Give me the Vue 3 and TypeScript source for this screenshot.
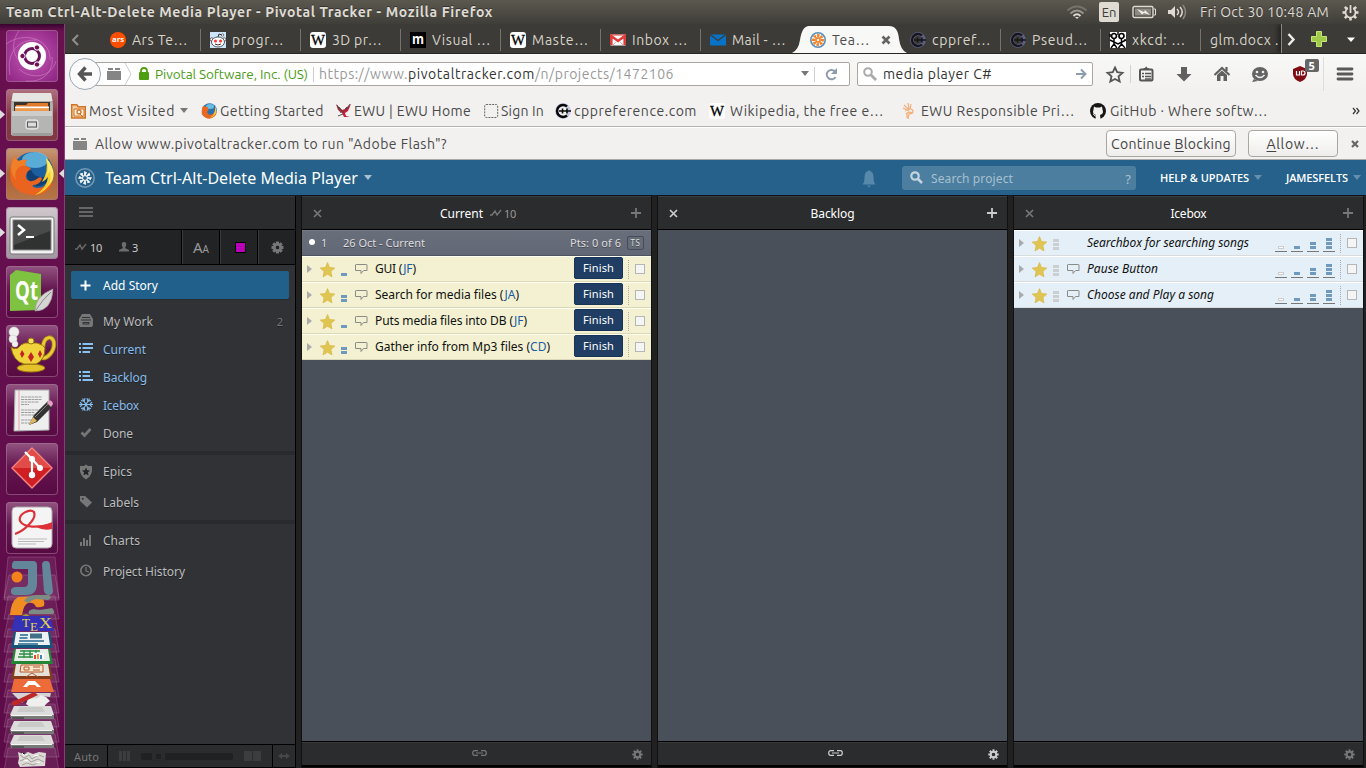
<script setup lang="ts">
import type { Directive } from 'vue'

// Tracks a label so that it fills a known width.
const vFit: Directive<HTMLElement, number> = {
  mounted(el, binding) {
    const natural = el.getBoundingClientRect().width
    const count = (el.textContent ?? '').trim().length
    if (count > 0 && natural > 0) {
      el.style.letterSpacing = `${(binding.value - natural) / count}px`
    }
  },
}

interface Tab { icon: string; label: string; w: number; active?: boolean }
const tabs: Tab[] = [
  { icon: 'ars', label: 'Ars Te…', w: 56 },
  { icon: 'reddit', label: 'progr…', w: 52 },
  { icon: 'wiki', label: '3D pr…', w: 50 },
  { icon: 'm', label: 'Visual …', w: 59 },
  { icon: 'wiki', label: 'Maste…', w: 57 },
  { icon: 'gmail', label: 'Inbox …', w: 56 },
  { icon: 'mail', label: 'Mail - …', w: 54 },
  { icon: 'pivotal', label: 'Tea…', w: 38, active: true },
  { icon: 'cpp', label: 'cppref…', w: 59 },
  { icon: 'cpp', label: 'Pseud…', w: 56 },
  { icon: 'xkcd', label: 'xkcd: …', w: 54 },
  { icon: '', label: 'glm.docx .', w: 69 },
]

interface Bookmark { icon: string; label: string; width: number; w: number; gap: number; menu?: boolean }
const bookmarks: Bookmark[] = [
  { icon: 'folder', label: 'Most Visited', width: 130, w: 86, gap: 2, menu: true },
  { icon: 'firefox', label: 'Getting Started', width: 135, w: 104, gap: 3 },
  { icon: 'eagle', label: 'EWU | EWU Home', width: 148, w: 117, gap: 2 },
  { icon: 'blank', label: 'Sign In', width: 71, w: 43, gap: 1 },
  { icon: 'cpp', label: 'cppreference.com', width: 154, w: 123, gap: 3 },
  { icon: 'wiki', label: 'Wikipedia, the free e…', width: 192, w: 154, gap: 5 },
  { icon: 'ewu', label: 'EWU Responsible Pri…', width: 189, w: 154, gap: 4 },
  { icon: 'github', label: 'GitHub · Where softw…', width: 180, w: 158, gap: 4 },
]

const menu = [
  { icon: 'inbox', label: 'My Work', w: 50, cls: '', count: '2' },
  { icon: 'list', label: 'Current', w: 43, cls: 'on' },
  { icon: 'list', label: 'Backlog', w: 44, cls: 'on' },
  { icon: 'snow', label: 'Icebox', w: 36, cls: 'on' },
  { icon: 'check', label: 'Done', w: 30, cls: '' },
]
const extras = [
  [{ icon: 'shield', label: 'Epics', w: 29 }, { icon: 'tag', label: 'Labels', w: 36 }],
  [{ icon: 'chart', label: 'Charts', w: 37 }, { icon: 'clock', label: 'Project History', w: 82 }],
]

interface Story { title: string; owner?: string; w: number; points: number; comment: boolean }
interface Panel { title: string; kind: string; tw: number; stories: Story[]; bright?: boolean; link: boolean }
const panels: Panel[] = [
  {
    title: 'Current', kind: 'current', tw: 43, link: true,
    stories: [
      { title: 'GUI', owner: 'JF', w: 41, points: 1, comment: true },
      { title: 'Search for media files', owner: 'JA', w: 144, points: 2, comment: true },
      { title: 'Puts media files into DB', owner: 'JF', w: 152, points: 1, comment: true },
      { title: 'Gather info from Mp3 files', owner: 'CD', w: 175, points: 2, comment: true },
    ],
  },
  { title: 'Backlog', kind: 'backlog', tw: 44, link: true, bright: true, stories: [] },
  {
    title: 'Icebox', kind: 'icebox', tw: 36, link: false,
    stories: [
      { title: 'Searchbox for searching songs', w: 162, points: 3, comment: false },
      { title: 'Pause Button', w: 71, points: 3, comment: true },
      { title: 'Choose and Play a song', w: 127, points: 3, comment: true },
    ],
  },
]

const tiles = ['ubuntu', 'files', 'firefox', 'terminal', 'qt', 'lamp', 'editor', 'git', 'pdf']
const traps = [557, 575, 596, 614, 629, 644, 659, 674, 690, 704, 719, 734, 748]
const gearTeeth = [0, 45, 90, 135, 180, 225, 270, 315]
</script>

<template>
  <div class="desktop">
    <header class="titlebar">
      <b v-fit="487">Team Ctrl-Alt-Delete Media Player - Pivotal Tracker - Mozilla Firefox</b>
      <div class="indicators">
        <svg class="wifi" width="20" height="16" viewBox="0 0 20 16" fill="none" stroke-width="1.800">
          <path d="M.5 6.500Q10-1.500 19.500 6.500" stroke="#77746b" /><path d="M3.500 9.500Q10 3.500 16.500 9.500" stroke="#99968c" /><path d="M6.500 12Q10 8.500 13.500 12" stroke="#dfdbd2" /><path d="M8 13h4l-2 2z" fill="#dfdbd2" />
        </svg>
        <span class="lang">En</span>
        <svg class="battery" width="25" height="14" viewBox="0 0 25 14">
          <rect x="1" y="1.500" width="20" height="11" rx="1.500" fill="none" stroke="#dfdbd2" stroke-width="1.400" /><rect x="3" y="3.500" width="16" height="7" fill="#8d8a82" /><path d="M22 4h1.500v6H22" fill="none" stroke="#dfdbd2" /><path d="M5 4l7 3 1-2 5 5-6-2-2 1.500z" fill="#f0ede7" />
        </svg>
        <svg class="volume" width="20" height="16" viewBox="0 0 20 16" fill="none" stroke="#dfdbd2" stroke-width="1.500">
          <path d="M1 6h3l4-4v12l-4-4H1z" fill="#dfdbd2" stroke="none" /><path d="M10 5q3 3 0 6M13 3q4.500 5 0 10" /><path d="M16 1q5 7 0 14" stroke="#8a877e" />
        </svg>
        <span v-fit="129" class="date">Fri Oct 30 10:48 AM</span>
        <svg class="power" width="17" height="17" viewBox="-8.500 -8.500 17 17">
          <g fill="#dfdbd2"><rect v-for="a in gearTeeth.slice(1)" :key="a" x="-1.300" y="-8" width="2.600" height="3.500" :transform="`rotate(${a})`" /></g>
          <circle r="5" fill="none" stroke="#dfdbd2" stroke-width="1.700" /><path d="M0-8V1" stroke="#4a4841" stroke-width="4.800" /><path d="M0-7.500V.5" stroke="#dfdbd2" stroke-width="1.800" />
        </svg>
      </div>
    </header>

    <div class="main">
      <aside class="launcher">
        <div v-for="t in tiles" :key="t" class="tile" :class="t">
          <svg width="52" height="52" viewBox="0 0 52 52">
            <g v-if="t === 'ubuntu'">
              <g fill="none" stroke="#d48bc8" stroke-opacity=".55"><path d="M13 1C7 9 5 21 12 29M0 14C20 0 45 10 44 30M4 45c-4-22 8-36 27-35M50 31C45 48 25 50 13 39M20 51c17 2 28-10 26-24" /></g>
              <circle cx="26" cy="26" r="14" fill="#fff" /><circle cx="26" cy="26" r="7.500" fill="none" stroke="#6b1159" stroke-width="3" />
              <g fill="#6b1159" stroke="#fff"><circle cx="16.500" cy="26" r="2.700" /><circle cx="31" cy="17.500" r="2.700" /><circle cx="31" cy="34.500" r="2.700" /></g>
            </g>
            <g v-else-if="t === 'files'">
              <path d="M7 4h38l2 11v31H5V15z" fill="#aeb0ad" /><path d="M7 4h38l1.500 8h-41z" fill="#e5e5e3" /><rect x="8" y="13" width="36" height="11" fill="#3d342e" /><path d="M10 16h10l2-2h20v7H10z" fill="#e07b2c" /><path d="M9 17.500h34v2H9z" fill="#fff" /><path d="M9 19.500h34v3H9z" fill="#ef994b" /><path d="M6 22h40l-.5 25h-39z" fill="#b5b6b4" /><path d="M6 22h40v5H6z" fill="#cdcecc" /><path d="M6.500 44h39v3h-39z" fill="#9c9d9b" /><rect x="20" y="31" width="12" height="9" rx="2" fill="#c9cac8" stroke="#eee" /><rect x="21.500" y="33" width="9" height="5" fill="#ddd" stroke="#555" />
            </g>
            <g v-else-if="t === 'firefox'">
              <circle cx="27" cy="24.500" r="20.500" fill="#1c5f9f" /><ellipse cx="29" cy="12" rx="13" ry="8" fill="#6fc4e8" opacity=".75" /><path d="M22 20c5 2 4 7 9 8 7 3 11 0 12-5 2 9-4 15-12 15-8-1-12-9-9-18z" fill="#123f72" />
              <path d="M9 8q0 4 4 5 4-2 8-1-3 3-1 6 4 1 5 3-4 2-5 6-1 5 4 6 4 1 8-3 4-2 4 1-3 6-9 6-2 2 4 3 9 0 13-10 4 7-2 12-6 6-16 5Q8 45 4.500 31 2.500 18 9 8z" fill="#ea6420" /><path d="M9 8q0 4 4 5 4-2 8-1-3 3-1 6-5-1-8 2-4 5-2 12-5-5-5-13 1-7 4-11z" fill="#f07f27" /><path d="M40 10q8 8 6.500 17Q44 43 29 47q12-7 13-18-3 4-6 5 7-11 4-24z" fill="#f7cf2c" /><path d="M40 10q4 11 0 19l4-6q3 13-7 20 15-11 9-24-2-5-6-9z" fill="#fbea6a" />
            </g>
            <g v-else-if="t === 'terminal'">
              <rect x="4" y="10" width="44" height="37" rx="2" fill="#f2f2f2" stroke="#777" /><rect x="7" y="13" width="38" height="30" fill="#303231" stroke="#888" /><path d="M8 14h36v10L8 38z" fill="#484b49" /><path d="M12 18l6 5-6 5" fill="none" stroke="#fff" stroke-width="2.500" /><path d="M20 30h8" stroke="#fff" stroke-width="2" />
            </g>
            <g v-else-if="t === 'qt'">
              <path d="M10 4l25 4v36L4 45V9z" fill="#7fc241" /><text x="9" y="34" font-family="Open Sans" font-weight="700" font-size="26" textLength="23" lengthAdjust="spacingAndGlyphs" fill="#fff">Qt</text><path d="M47 23q-1 22-18 22 0-15 18-22z" fill="#d5d6d3" stroke="#999" stroke-width=".7" /><path d="M30 44q7-11 15-18" fill="none" stroke="#888" />
            </g>
            <g v-else-if="t === 'lamp'">
              <g fill="#f0f0f0" stroke="#ccc" stroke-width=".6"><circle cx="8" cy="7" r="5" /><circle cx="7" cy="14" r="4" /><circle cx="9" cy="19" r="3" /></g><path d="M37 22c1-12 11-12 11-3 0 8-7 15-12 14" fill="none" stroke="#a6850f" stroke-width="4.500" /><path d="M37 22c1-12 11-12 11-3 0 8-7 15-12 14" fill="none" stroke="#e9cb39" stroke-width="2.800" /><ellipse cx="25" cy="43" rx="14" ry="4" fill="#e5c22c" stroke="#96770e" /><path d="M5 22q3 3 7 1 3-4 7-5h12q7 2 8 5 0 12-9 16H18Q7 36 5 22z" fill="#f0d33c" stroke="#94740b" /><circle cx="25" cy="16" r="3" fill="#f7df5a" stroke="#94740b" /><g fill="#c42323"><path d="M16 25l2.500 4-2.500 4-2-4zM25 27l3 5-3 5-3-5zM34 25l2 4-2 4-2-4z" /></g>
            </g>
            <g v-else-if="t === 'editor'">
              <path d="M9 6h34v40l-35 1z" fill="#eee" stroke="#aaa" /><path d="M13 6v40" stroke="#e6a4a4" /><g stroke="#888" stroke-width=".8"><path d="M15 13h21M15 15.500h21M15 18h18M15 20.500h8M15 26h20M15 28.500h14M15 31h18M15 36h11M15 39h10" stroke-dasharray="3 .5" /></g><path d="M28 31L42 17l5 5-16 16-8 3z" fill="#343434" /><path d="M29 33L43 19" stroke="#888" /><path d="M23 41l4-8 4 4z" fill="#dfb760" /><path d="M42 17q4-2 5 3l-2 3-4-4z" fill="#e7a1c2" />
            </g>
            <g v-else-if="t === 'git'">
              <path d="M26 5L46 25 26 45 6 25z" fill="#d01f22" stroke="#f48580" stroke-linejoin="round" stroke-width="1.500" /><path d="M26 6L45 25H7z" fill="#ee6a62" opacity=".6" /><path d="M19 9l7 7v16M26 16l8 9" fill="none" stroke="#fff" stroke-width="2.200" /><g fill="#fff"><circle cx="26" cy="16" r="3" /><circle cx="26" cy="32" r="3.200" /><circle cx="34" cy="25" r="3" /></g>
            </g>
            <g v-else>
              <rect x="6" y="5" width="40" height="41" rx="4" fill="#f4f4f4" stroke="#aaa" /><path d="M9 32C18 29 31 17 28 10 24 6 12 12 14 19 18 26 32 26 45 22" fill="none" stroke="#dc3138" stroke-width="2.200" /><path d="M30 25q9-1 16-5v7q-8 2-16-2z" fill="#dc3138" /><path d="M12 37h29M12 39.500h26M12 42h18" stroke="#bbb" />
            </g>
          </svg>
        </div>
        <svg class="stack" width="64" height="214" viewBox="0 554 64 214">
          <path v-for="(y, i) in traps" :key="y" :d="`M${8 + (i % 2)} ${y}H55L59 ${y + (i ? 23 : 43)}H4z`" fill="#fff" fill-opacity=".07" stroke="#d4a9c8" stroke-opacity=".25" />
          <path d="M14 561h19q4 0 4 4v18q0 12-10 12H15q-5 0-4-5 1-3 5-3h8q4 0 4-4v-14H15q-4 0-3-4 0-3 2-4z" fill="#64869b" /><path d="M42 565q0-4 4-4t4 4l3 26q0 4-4 4t-5-4z" fill="#64869b" /><circle cx="17" cy="577" r="5.500" fill="#f3821d" />
          <path d="M10 615q1-14 8-18l20-1q8 3 6 10-4 2-8 1-2-5-8-4-4 1-6 12z" fill="#ef8c22" /><path d="M24 601q3-6 12-6h13q4 3-1 5l-12-1q-5 1-7 4zM29 614q-2-4 5-5 4 2 18-1 4 4 1 6H38z" fill="#7d8b85" />
          <path d="M15 616h35l4 15H11z" fill="#3431b7" /><path d="M22 616l4-2 4 2z" fill="#9aa62f" /><text x="22" y="627" font-family="Liberation Serif" font-size="13" fill="#e5d34e">T</text><text x="30" y="631" font-family="Liberation Serif" font-size="13" fill="#e5d34e">E</text><text x="39" y="628" font-family="Liberation Serif" font-size="14" textLength="13" lengthAdjust="spacingAndGlyphs" fill="#e5d34e">X</text>
          <path d="M14 632h36l3 16H11z" fill="#155579" /><path d="M16 632h32l2 13H14z" fill="#edf3f5" /><path d="M20 635h8M19.500 638h8M19 641h25M18 644h20" stroke="#24658e" stroke-width="1.300" /><path d="M30 633.500h12v5H30z" fill="#3f7087" />
          <path d="M14 649h36l3 15H11z" fill="#238636" /><path d="M16 649h32l2 12H14z" fill="#e7eee7" /><path d="M20 651h20M19 654h21M18 657h22M24 650v8M30 650v8M36 650v8" stroke="#2c8d42" stroke-width="1.300" /><path d="M33 653h11v6H33z" fill="#fff" /><path d="M35 659v-4" stroke="#e34a2b" stroke-width="2" /><path d="M38 659v-5" stroke="#f0902f" stroke-width="2" /><path d="M41 659v-4" stroke="#3c82c4" stroke-width="2" />
          <path d="M14 665h36l3 14H11z" fill="#843d1b" /><path d="M16 664h32l2 12H14z" fill="#e4e1d8" /><path d="M21 665h22v7H20z" fill="#f5e4ce" stroke="#b65825" /><path d="M24 667h5v3h-5zM33 667h7M33 670h7M26 677l6-4 6 4" fill="none" stroke="#b65825" />
          <path d="M14 679h36l4 13H11z" fill="#ec6b38" /><path d="M23 687l5-6h7l6 6h-4l-2-2h-6l-2 2z" fill="#fff" />
          <path d="M12 693h39l-1 4-9-1q3 4-4 5l-10-2-5 4z" fill="#d5d5d3" /><path d="M28 699l10-1 3-3 5 2 4 4-4 3-2 3-6-1-8 1-4-3z" fill="#efefed" /><path d="M11 704q1-4 6-4l17-8 4 3-19 9q-5 3-8 0z" fill="#bd2828" />
          <g v-for="y in [706, 721, 735]" :key="y"><path :d="`M14 ${y}h37l3 9H10z`" fill="#dcdddb" /><path :d="`M20 ${y + 1}h22l3 5H17z`" fill="#cacbc9" /><path :d="`M10 ${y + 9}h44v4H11z`" fill="#777a76" /><path :d="`M11 ${y + 9.500}h41`" stroke="#f7f7f7" /><path :d="`M12 ${y + 12}h12`" stroke="#333" /></g>
          <path d="M18 752l5 2 5-2 5 2 6-2 7 1-1 13-25 1-2-4 1-5z" fill="#dddbd5" /><path d="M20 755l4 3 5-3 3 4 7-4 5 2M20 761l7-3 4 4 7-3 6 3M22 765l5-2 6 2 5-2" fill="none" stroke="#a3a19b" /><path d="M22 753l2 2 4-1M34 756l5-1M24 760l4 1M36 763l4-1" stroke="#fff" />
        </svg>
        <svg class="pips" width="64" height="260" viewBox="0 24 64 260"><path d="M0 110l5 4.500L0 119zM0 169l5 4.500L0 178zM0 228l5 4.500L0 237zM64 169l-5 4.500 5 4.500z" fill="#ddd" /></svg>
      </aside>

      <section class="window">
        <div class="tabs">
          <div class="scroll-left"><svg width="12" height="16" viewBox="0 0 12 16"><path d="M9 3L4 8l5 5" fill="none" stroke="#929087" stroke-width="2" /></svg></div>
          <div v-for="(t, i) in tabs" :key="i" class="tab" :class="{ active: t.active, nosep: i === 6 || i === 11, plain: !t.icon }">
            <svg v-if="t.active" class="tabshape" width="124" height="28" viewBox="0 0 124 28"><path d="M0 28Q10 27 12 14 14 0 21 0H101Q110 0 111 13 113 28 124 28z" fill="#f8f8f7" /></svg>
            <svg v-if="t.icon" class="fav" width="16" height="16" viewBox="0 0 16 16">
              <g v-if="t.icon === 'ars'"><circle cx="8" cy="8" r="8" fill="#ff4e00" /><text x="2" y="10" font-size="7" font-weight="700" font-family="Open Sans" textLength="12" lengthAdjust="spacingAndGlyphs" fill="#fff">ars</text></g>
              <g v-else-if="t.icon === 'reddit'"><rect width="16" height="16" fill="#cde5f8" /><circle cx="1.800" cy="7.500" r="1.700" fill="#fff" stroke="#333" stroke-width=".7" /><circle cx="14.200" cy="7.500" r="1.700" fill="#fff" stroke="#333" stroke-width=".7" /><ellipse cx="8" cy="10" rx="6.500" ry="5" fill="#fff" stroke="#333" stroke-width=".8" /><path d="M8 5l1-3 3 1M5 12q3 2 6 0" fill="none" stroke="#333" /><circle cx="12.500" cy="3" r="1.200" fill="#fff" stroke="#333" stroke-width=".6" /><circle cx="5.500" cy="9" r="1.500" fill="#f33" /><circle cx="10.500" cy="9" r="1.500" fill="#f33" /></g>
              <g v-else-if="t.icon === 'wiki'"><rect width="16" height="16" rx="3" fill="#fff" /><text x="1" y="13" font-family="Liberation Serif" font-size="15" textLength="14" lengthAdjust="spacingAndGlyphs" stroke="#000" stroke-width=".3">W</text></g>
              <g v-else-if="t.icon === 'm'"><rect width="16" height="16" fill="#000" /><text x="2" y="12" font-family="Open Sans" font-weight="700" font-size="14" textLength="12" lengthAdjust="spacingAndGlyphs" fill="#fff">m</text></g>
              <g v-else-if="t.icon === 'gmail'"><rect y="2.500" width="16" height="11" rx="1" fill="#fff" /><path d="M1.300 13V4L8 9l6.700-5v9" fill="none" stroke="#df3d3a" stroke-width="2.600" /><path d="M1 3h14" stroke="#df3d3a" /><path d="M3 13l4-4M13 13L9 9" stroke="#e5aaa7" /></g>
              <g v-else-if="t.icon === 'mail'"><path d="M0 2.500h16v11H0z" fill="#0872c6" /><path d="M0 2.500l8 6 8-6" fill="none" stroke="#3c3b37" stroke-width="1.300" /></g>
              <g v-else-if="t.icon === 'pivotal'"><circle cx="8" cy="8" r="7.200" fill="#f5f7f8" stroke="#5b91bb" stroke-width="1.600" /><g stroke="#f08227" stroke-width="1.800"><path v-for="a in gearTeeth" :key="a" d="M8 5.500V2.800l1.500.8" fill="none" :transform="`rotate(${a} 8 8)`" /></g><circle cx="8" cy="8" r="2" fill="none" stroke="#f08227" stroke-width="1.500" /></g>
              <g v-else-if="t.icon === 'cpp'" fill="none"><circle cx="8" cy="8" r="6" stroke="#5c6080" stroke-width="3.800" /><path d="M12 3.500A6 6 0 1 0 12 12.500" stroke="#15151b" stroke-width="2.300" /><path d="M4 8h12M7.500 5.500v5M12 5.500v5" stroke="#15151b" stroke-width="1.500" /></g>
              <g v-else><path d="M0 0h16v16H0z" fill="#fff" /><circle cx="4" cy="4" r="2.500" fill="#fff" stroke="#000" stroke-width="1.700" /><circle cx="11.500" cy="4" r="2.500" fill="#fff" stroke="#000" stroke-width="1.700" /><path d="M4 7v5l-3 4M4 12l3 4M11.500 7v5l-3 4M11.500 12l3.500 4M0 8l4 2 4 2 4-2 4-2M8 0v3M15 7v2M0 2v3" fill="none" stroke="#000" stroke-width="1.400" /></g>
            </svg>
            <span class="tablabel"><span v-fit="t.w">{{ t.label }}</span></span>
            <svg v-if="t.active" class="tabclose" width="10" height="10" viewBox="0 0 10 10"><path d="M1.500 1.500l7 7M8.500 1.500l-7 7" stroke="#64635f" stroke-width="2.600" /></svg>
          </div>
          <div class="tabtools">
            <svg width="85" height="30" viewBox="0 0 85 30"><path d="M6.500 10l5 5.500-5 5.500" fill="none" stroke="#eee" stroke-width="2.400" /><path d="M34.500 7.500h5v5h5v5h-5v5h-5v-5h-5v-5h5z" fill="#9fca48" stroke="#c6e57b" /><path d="M65 13.500h8l-4 4.500z" fill="#fff" /></svg>
          </div>
        </div>

        <div class="navbar">
          <div class="back"><svg width="18" height="18" viewBox="0 0 18 18"><path d="M9.500 2.500L3.500 9l6 6.500M4 9h12" fill="none" stroke="#555" stroke-width="3.400" /></svg></div>
          <div class="url">
            <svg class="brick" width="14" height="14" viewBox="0 0 14 14"><path d="M1 1h5v2H1zM8 1h5v2H8zM0 4h14v9H0z" fill="#858585" /></svg>
            <svg class="chev" width="9" height="22" viewBox="0 0 9 22"><path d="M1 0l6 11-6 11" fill="none" stroke="#ccc" /></svg>
            <svg class="lock" width="10" height="13" viewBox="0 0 10 13"><path d="M2 6V4q0-3 3-3t3 3v2" fill="none" stroke="#4d9e12" stroke-width="1.800" /><rect y="5" width="10" height="8" rx="1" fill="#4d9e12" /></svg>
            <span class="green"><span v-fit="153">Pivotal Software, Inc. (US)</span></span>
            <span class="address"><span v-fit="89" class="dim">https://www.</span><span v-fit="127">pivotaltracker.com</span><span v-fit="139" class="dim">/n/projects/1472106</span></span>
            <svg class="drop" width="8" height="6" viewBox="0 0 8 6"><path d="M0 0h8L4 5z" fill="#777" /></svg>
            <span class="reload"><svg width="13" height="13" viewBox="0 0 13 13"><path d="M10 3.500A4.700 4.700 0 1 0 10.500 9" fill="none" stroke="#8e9dac" stroke-width="2" /><path d="M12 0v6H6z" fill="#8e9dac" /></svg></span>
          </div>
          <div class="search">
            <svg width="14" height="14" viewBox="0 0 14 14"><circle cx="5" cy="5" r="3.800" fill="none" stroke="#aaa" stroke-width="2" /><path d="M8 8l5 5" stroke="#aaa" stroke-width="2.800" /></svg>
            <span v-fit="109">media player C#</span>
            <svg class="go" width="12" height="12" viewBox="0 0 12 12"><path d="M1 6h9M6 1.500l4.500 4.500L6 10.500" fill="none" stroke="#8b9dae" stroke-width="2" /></svg>
          </div>
          <svg class="tools" width="273" height="37" viewBox="1093 54 273 37">
            <path d="M1115 67.500l2.200 4.700 5.300.6-4 3.600 1.200 5.200-4.700-2.600-4.700 2.600 1.200-5.200-4-3.600 5.300-.6z" fill="none" stroke="#555" stroke-width="1.800" />
            <path d="M1130.500 65v18" stroke="#ccd3db" />
            <rect x="1140" y="69.500" width="12.500" height="11" rx="1" fill="none" stroke="#565656" stroke-width="2" /><path d="M1142 73.500h2M1145 73.500h6M1142 76.500h2M1145 76.500h6M1145 79h6" stroke="#565656" stroke-width="1.300" /><path d="M1142 70l2-2h1q1.200-3 2.400 0h1l2 2z" fill="#565656" />
            <path d="M1181 67h6v7h4.500l-7.500 7.500-7.500-7.500h4.500z" fill="#606060" />
            <path d="M1214.500 75l7.500-7 7.500 7M1226.500 67v4" fill="none" stroke="#606060" stroke-width="2.200" /><path d="M1217 75l5-4.500 5 4.500v6h-3.500v-5h-3v5H1217z" fill="#606060" />
            <ellipse cx="1260" cy="74" rx="8" ry="7" fill="#646464" /><path d="M1254 79l-2 3 6-1z" fill="#646464" /><circle cx="1257" cy="72" r="1.300" fill="#eee" /><circle cx="1263" cy="72" r="1.300" fill="#eee" /><path d="M1255.500 75q4.500 5 9 0" fill="none" stroke="#eee" stroke-width="1.400" />
            <path d="M1300 66l7 3v5q0 5-7 8-7-3-7-8v-5z" fill="#800d14" /><path d="M1296.500 71v4h3V71m2 0h1.500q2 0 2 2t-2 2h-1.500z" fill="none" stroke="#fff" stroke-width="1.200" />
            <rect x="1305" y="59" width="14" height="13" rx="2" fill="#666" /><text x="1308.500" y="69.500" font-family="Open Sans" font-size="11" font-weight="700" fill="#fff">5</text>
            <path d="M1323.500 57v34" stroke="#ddd" /><path d="M1338 69h14M1338 74h14M1338 79h14" stroke="#595959" stroke-width="2.800" stroke-linecap="round" />
          </svg>
        </div>

        <nav class="bookmarks">
          <div v-for="b in bookmarks" :key="b.label" class="bm" :style="{ width: b.width + 'px' }">
            <svg width="16" height="16" viewBox="0 0 16 16">
              <g v-if="b.icon === 'folder'"><path d="M.7 15V1.700h5l1.500 2h7.100V15z" fill="#f5c99a" stroke="#d07325" stroke-width="1.400" /><path d="M3 6h10v7H3z" fill="#fff4e6" stroke="#d07325" /><circle cx="8" cy="9" r="2" fill="none" stroke="#d07325" stroke-width="1.300" /><path d="M9 11l3 3" stroke="#d07325" /></g>
              <g v-else-if="b.icon === 'firefox'"><circle cx="8.500" cy="7.500" r="7.300" fill="#2c72ad" /><ellipse cx="9" cy="3.500" rx="4" ry="2.500" fill="#6cbde4" /><path d="M2 3q2 0 3 1 1 0 2 0-1 2 1 3-3 1-1 4 3 2 6-1 1-2 1-4 3 4 0 7-4 4-9 2-7-3-3-12z" fill="#e86821" /><path d="M14 3q2 4 1 7-2 4-6 5 4-3 5-7z" fill="#f7c93d" /></g>
              <g v-else-if="b.icon === 'eagle'"><path d="M0 1l6 6 3-1 6-5-3 7-3 2 1 3 4 1-6 0-2-4-4-3z" fill="#c81f3a" /><path d="M1 2l4 8M14 1l-5 7M2 13l5-2M9 6l2-2M3 4l5 6" stroke="#444" stroke-width=".9" /></g>
              <rect v-else-if="b.icon === 'blank'" x=".7" y="1.500" width="13" height="13" rx="1.500" fill="none" stroke="#666" stroke-dasharray="2 1" />
              <g v-else-if="b.icon === 'cpp'" fill="none"><circle cx="8" cy="8" r="6" stroke="#c5c8dd" stroke-width="3.800" /><circle cx="8" cy="8" r="4.500" fill="#f2f1f0" /><path d="M12 3.500A6 6 0 1 0 12 12.500" stroke="#08080a" stroke-width="2.500" /><path d="M4 8h12M7.500 5.500v5M12 5.500v5" stroke="#08080a" stroke-width="1.600" /></g>
              <g v-else-if="b.icon === 'wiki'"><rect width="16" height="16" rx="3" fill="#fff" /><text x="1" y="13" font-family="Liberation Serif" font-size="15" textLength="14" lengthAdjust="spacingAndGlyphs" stroke="#000" stroke-width=".3">W</text></g>
              <g v-else-if="b.icon === 'ewu'" fill="none" stroke="#f2ad77" stroke-width="1.200"><path d="M2 5l6 3M3 2l5 5M7 0l1 6M10 1L9 6M4 8q7-4 8 0 0 3-4 3M6 10v5M5 11q3-3 6-1l-3 1-1 5" /></g>
              <g v-else><circle cx="8" cy="8" r="8" fill="#171515" /><path d="M4 3.500l2 1h4l2-1 .5 3q1.500 4.500-2.500 5.500l.5 4h-5L6 12Q2 11 3.500 6.500z" fill="#f2f1f0" /><path d="M3 11q1 0 2 2h1" fill="none" stroke="#f2f1f0" /></g>
            </svg>
            <span v-fit="b.w" :style="{ marginLeft: b.gap + 'px' }">{{ b.label }}</span>
            <i v-if="b.menu" class="caret" />
          </div>
          <svg class="more" width="8" height="8" viewBox="0 0 8 8"><path d="M1 1l2.500 3L1 7M4.500 1L7 4 4.500 7" fill="none" stroke="#333" stroke-width="1.200" /></svg>
        </nav>

        <div class="notice">
          <svg width="14" height="14" viewBox="0 0 14 14"><path d="M1 1h5v2H1zM8 1h5v2H8zM0 4h14v9H0z" fill="#858585" /></svg>
          <span v-fit="352" class="msg">Allow www.pivotaltracker.com to run "Adobe Flash"?</span>
          <button class="block"><span v-fit="120">Continue <u>B</u>locking</span></button>
          <button class="allow"><span v-fit="53"><u>A</u>llow…</span></button>
          <svg class="x" width="8" height="8" viewBox="0 0 8 8"><path d="M1 1l6 6M7 1L1 7" stroke="#666" stroke-width="2.200" /></svg>
        </div>

        <div class="projectbar">
          <svg class="logo" width="20" height="20" viewBox="-10 -10 20 20"><circle r="9.200" fill="none" stroke="#779bb5" stroke-width="1.400" /><g stroke="#fff" stroke-width="1.700" fill="none"><path v-for="a in gearTeeth" :key="a" d="M0-2.500V-5.600l1.600.8" :transform="`rotate(${a})`" /></g><circle r="2.400" fill="none" stroke="#fff" /></svg>
          <span v-fit="253" class="project">Team Ctrl-Alt-Delete Media Player</span><i class="caret light" />
          <svg class="bell" width="14" height="18" viewBox="0 0 14 18"><path d="M.5 14.500q2-2 2-7.500 0-5 3.500-6V.5h2V1q3.500 1 3.500 6 0 5.500 2 7.500zM5 15.500h4l-2 2z" fill="#5689aa" /></svg>
          <div class="psearch"><svg width="13" height="13" viewBox="0 0 13 13"><circle cx="5" cy="5" r="3.700" fill="none" stroke="#c5d5e0" stroke-width="2.200" /><path d="M8 8l4 4" stroke="#c5d5e0" stroke-width="2.500" /></svg><span v-fit="82">Search project</span><em>?</em></div>
          <b v-fit="89" class="help">HELP &amp; UPDATES</b><i class="caret faint" />
          <b v-fit="62" class="user">JAMESFELTS</b><i class="caret faint" />
        </div>

        <div class="workspace">
          <div class="sidebar">
            <div class="burger"><i /><i /><i /></div>
            <div class="stats">
              <div class="vel"><svg width="12" height="8" viewBox="0 0 12 8"><path d="M0 6h2l3-4 2 4 4-5" fill="none" stroke="#666" stroke-width="1.500" /></svg><span v-fit="12">10</span><svg class="person" width="10" height="10" viewBox="0 0 10 10"><path d="M3 4q-1-4 2-4t2 4l-1 2 4 2v1.500H0V8l4-2z" fill="#6d6d6d" /></svg><span>3</span></div>
              <div class="font"><big>A</big><small>A</small></div>
              <div><i class="swatch" /></div>
              <div><svg width="13" height="13" viewBox="-6.500 -6.500 13 13" fill="#777"><rect v-for="a in gearTeeth" :key="a" x="-1.500" y="-6" width="3" height="4" :transform="`rotate(${a})`" /><circle r="3.300" fill="none" stroke="#777" stroke-width="2.600" /></svg></div>
            </div>
            <div class="add"><svg width="11" height="11" viewBox="0 0 11 11"><path d="M5.500 .5v10M.5 5.500h10" stroke="#fff" stroke-width="2" /></svg><span v-fit="55">Add Story</span></div>
            <div class="menu">
              <div v-for="m in menu" :key="m.label" class="entry" :class="m.cls">
                <svg width="14" height="14" viewBox="0 0 14 14">
                  <g v-if="m.icon === 'inbox'"><path d="M3 0h8l3 5v6l-1 2H1l-1-2V5z" fill="#777" /><path d="M3 3.500h8M2 6h10M4 8.500h6v1.500H4z" fill="none" stroke="#303236" /></g>
                  <path v-else-if="m.icon === 'list'" :d="m.label === 'Current' ? 'M0 2h2M3.500 2H14M0 6h2M3.500 6H14M0 10h2M3.500 10H11' : 'M0 2h2M3.500 2H11M0 6h2M3.500 6H11M0 10h2M3.500 10H14'" stroke="#87c0f3" stroke-width="2" />
                  <g v-else-if="m.icon === 'snow'" stroke="#87c0f3" stroke-width="1.100" fill="none"><path v-for="a in [30, 90, 150, 210, 270, 330]" :key="a" d="M7 6.500V-.5M4.700.5L7 2.800 9.300.5" :transform="`rotate(${a} 7 6.500)`" /></g>
                  <path v-else d="M2.500 6.500l3 3L11.500 3" fill="none" stroke="#777" stroke-width="2.600" />
                </svg>
                <span v-fit="m.w">{{ m.label }}</span><em v-if="m.count">{{ m.count }}</em>
              </div>
            </div>
            <div v-for="(g, gi) in extras" :key="gi" class="extra">
              <div v-for="m in g" :key="m.label" class="entry">
                <svg width="14" height="14" viewBox="0 0 14 14">
                  <g v-if="m.icon === 'shield'"><path d="M7-.5l2 1.500 4 0q1 10-6 13.500Q0 11 1 1l4 0z" fill="#777" /><path d="M7 2.500l1.200 2.700 2.900.3-2.200 2 .7 2.900L7 9l-2.600 1.400.7-2.900-2.200-2 2.900-.3z" fill="#222428" /></g>
                  <g v-else-if="m.icon === 'tag'"><path d="M1 0h5l7 6.500L8 11.500 1 5z" fill="#777" /><circle cx="3.700" cy="2.700" r="1" fill="#303236" /></g>
                  <path v-else-if="m.icon === 'chart'" d="M2 12V8M5 12V4M8 12V6M11 12V1" stroke="#777" stroke-width="2" />
                  <g v-else fill="none" stroke="#777"><circle cx="7" cy="5.500" r="5.200" stroke-width="1.600" /><path d="M7 2v4l3 1" stroke-width="1.200" /></g>
                </svg>
                <span v-fit="m.w">{{ m.label }}</span>
              </div>
            </div>
            <div class="zoombar"><div class="auto"><span v-fit="25">Auto</span></div><div class="slider"><i class="cols" /><i class="track"><i /></i><i class="wide" /></div><div class="arrows"><svg width="12" height="8" viewBox="0 0 12 8"><path d="M0 4l4-3v2h4V1l4 3-4 3V5H4v2z" fill="#454749" /></svg></div></div>
          </div>

          <div v-for="p in panels" :key="p.title" class="panel" :class="[p.kind, { bright: p.bright }]">
            <div class="phead">
              <svg width="9" height="9" viewBox="0 0 9 9"><path d="M1 1l7 7M8 1L1 8" class="ctl" stroke-width="1.700" /></svg>
              <div class="ptitle"><span v-fit="p.tw">{{ p.title }}</span><template v-if="p.kind === 'current'"><svg width="12" height="8" viewBox="0 0 12 8"><path d="M0 6h2l3-4 2 4 4-5" fill="none" stroke="#777" stroke-width="1.400" /></svg><em v-fit="12">10</em></template></div>
              <svg width="10" height="10" viewBox="0 0 10 10"><path d="M5 0v10M0 5h10" class="ctl" stroke-width="1.800" /></svg>
            </div>
            <div v-if="p.kind === 'current'" class="iteration"><i class="dot" /><span class="num">1</span><span v-fit="82">26 Oct - Current</span><span v-fit="51" class="pts">Pts: 0 of 6</span><span class="ts">TS</span></div>
            <div class="stories">
              <div v-for="s in p.stories" :key="s.title" class="story">
                <i class="expand" />
                <svg width="16" height="16" viewBox="0 0 16 16"><path d="M7.500 .6l2.100 4.900 5.200.5-3.900 3.600 1.100 5.300L7.500 12.200l-4.500 2.700 1.100-5.300L.2 6l5.200-.5z" fill="#e0c552" stroke="#d7b743" stroke-width=".7" /></svg>
                <span class="points"><i v-for="n in s.points" :key="n" /></span>
                <span><svg v-if="s.comment" class="bubble" width="13" height="12" viewBox="0 0 13 12"><path d="M1.500 1.500h10q.5 0 .5.500v5.500H8.500L6 10.500v-3H.5V2q0-.5.5-.5z" fill="none" stroke="#8b8b85" /></svg></span>
                <span class="name"><span v-fit="s.w">{{ s.title }}<template v-if="s.owner"> (<a>{{ s.owner }}</a>)</template></span></span>
                <span v-if="s.owner" class="finish"><span v-fit="31">Finish</span></span>
                <span v-else class="estimates"><i v-for="n in 4" :key="n" class="est"><b v-for="k in Math.max(1, n - 1)" :key="k" :class="{ hollow: n === 1 }" /></i></span>
                <span class="pick"><i /></span>
              </div>
            </div>
            <div class="pfoot"><svg v-if="p.link" class="link" width="15" height="6" viewBox="0 0 15 6"><path d="M6 .7H2.500Q.7.700.7 3t1.800 2.300H6M9 .7h3.500Q14.300.700 14.300 3t-1.800 2.300H9M4 3h7" fill="none" class="ctl2" stroke-width="1.200" /></svg><svg class="cog" width="11" height="11" viewBox="-5.500 -5.500 11 11"><g class="ctlf"><rect v-for="a in gearTeeth" :key="a" x="-1" y="-5.200" width="2" height="3" :transform="`rotate(${a})`" /></g><circle r="2.800" fill="none" class="ctl2" stroke-width="2" /></svg></div>
          </div>
        </div>
      </section>
    </div>
  </div>
</template>

<style>
body { overflow: hidden; }
</style>
<style scoped>
* { box-sizing: border-box; }
.desktop { width: 1366px; height: 768px; overflow: hidden; font-family: "Ubuntu", "Noto Sans", "Open Sans", sans-serif; font-size: 14px; display: flex; flex-direction: column; }
svg { display: block; flex: none; }
span, b { white-space: nowrap; }
[class*="label"] > span { display: inline-block; }
em, i { font-style: normal; }
.titlebar { height: 24px; flex: none; background: linear-gradient(#5b584f, #403e39); color: #dfdbd2; display: flex; align-items: center; justify-content: space-between; padding-left: 6px; text-shadow: 0 -1px #333; }
.titlebar b { font-size: 14px; }
.indicators { display: flex; align-items: center; height: 24px; width: 299px; flex: none; }
.lang { width: 20px; height: 20px; margin: 0 13px 0 12px; border-radius: 2px; background: #dfdbd2; color: #3c3b37; font-size: 13px; line-height: 20px; text-align: center; text-shadow: none; }
.battery { margin-right: 10px; }
.volume { margin-right: 13px; }
.power { margin-left: 13px; }
.main { display: flex; flex: 1; min-height: 0; }
.launcher { width: 65px; flex: none; background: linear-gradient(#38052f, #69104f 7px, #630e4d 50%, #5d0b48); border-right: 1px solid #8b3d77; display: flex; flex-direction: column; align-items: flex-start; gap: 7px; padding-top: 6px; position: relative; }
.tile { width: 52px; height: 52px; flex: none; margin-left: 6px; border-radius: 4px; background: linear-gradient(#925481, #651650 45%, #570942); box-shadow: inset 0 0 0 1px #a4759699; overflow: hidden; }
.tile.ubuntu { background: radial-gradient(#c459b6, #8c2280); }
.tile.files { background: linear-gradient(#b07180, #873642 50%, #823844); }
.tile.firefox { background: linear-gradient(#c99878, #a86237 50%, #b87647); }
.tile.terminal { background: linear-gradient(#d0c8cd, #a197a0); }
.stack { margin-top: -7px; }
.pips { position: absolute; left: 0; top: 0; }
.window { flex: 1; min-width: 0; display: flex; flex-direction: column; color: #4a4a4a; }
.tabs { height: 30px; flex: none; background: #3c3b37; border-bottom: 1px solid #252522; display: flex; overflow: hidden; position: relative; color: #d8d4ca; }
.scroll-left { width: 35px; flex: none; padding: 8px 0 0 4px; }
.tab { width: 100px; flex: none; display: flex; align-items: center; padding: 2px 0 0 10px; height: 29px; position: relative; padding-bottom: 0; }
.tab:not(.nosep):not(.active)::after { content: ''; position: absolute; right: -1px; top: 5px; width: 1px; height: 22px; background: #74736e; }
.tab.plain { width: 80px; }
.tab .fav { position: relative; overflow: visible; }
.tablabel { margin-left: 6px; position: relative; line-height: 20px; }
.tab.plain .tablabel { margin-left: 0; }
.tab.active { color: #4c4c4c; z-index: 2; }
.tabshape { position: absolute; left: -12px; top: 2px; }
.tabclose { position: absolute; left: 81px; top: 11px; }
.tabtools { width: 85px; border-left: 1px solid #8a8983; flex: none; margin-left: 1px; background: #3c3b37; box-shadow: -3px 0 5px #222; }
.navbar { height: 37px; flex: none; background: linear-gradient(#f8f8f7, #f2f1f0); display: flex; position: relative; }
.back { position: absolute; left: 4px; top: 4px; width: 32px; height: 32px; border: 1px solid #9aa7b4; border-radius: 50%; background: #fbfbfb; display: grid; place-items: center; z-index: 2; }
.url, .search { height: 24px; border: 1px solid #aaa7a1; border-radius: 2px; background: #fff; display: flex; align-items: center; margin-top: 8px; line-height: 23px; }
.url { width: 765px; margin-left: 20px; padding-left: 21px; }
.chev { margin-left: 3px; margin-right: 6px; }
.lock { margin-top: -2px; }
.green { margin-left: 6px; width: 159px; border-right: 1px solid #ccc; height: 15px; line-height: 14px; color: #4b9b15; font-size: 13.500px; }
.green span, .address span { display: inline-block; }
.address { margin-left: 5px; width: 482px; color: #333; display: flex; margin-top: 1px; }
.address .dim { color: #999; }
.drop { margin-right: 5px; }
.reload { border-left: 1px solid #ccc; padding: 1px 0 1px 10px; }
.search { width: 236px; margin-left: 7px; padding: 0 5px; color: #333; }
.search span { margin-left: 6px; }
.search .go { margin-left: auto; }
.bookmarks { height: 36px; flex: none; background: #f2f1f0; border-bottom: 1px solid #b6b3ad; display: flex; align-items: center; padding: 4px 0 0 6px; line-height: 20px; }
.bm { display: flex; align-items: center; flex: none; }
.bm svg { overflow: visible; }
.caret { width: 8px; height: 5px; background: #777; clip-path: polygon(0 0, 100% 0, 50% 100%); margin-left: 6px; flex: none; }
.bm .caret { margin-left: 5px; }
.more { margin-left: 82px; }
.notice { height: 33px; flex: none; background: #f2f1f0; border-bottom: 1px solid #aaa9a7; border-top: 1px solid #fff; display: flex; align-items: center; padding-left: 8px; }
.msg { margin-left: 8px; }
.notice button { font: inherit; color: #444; height: 27px; border: 1px solid #aaa7a1; border-radius: 4px; background: linear-gradient(#fff, #eeedeb); padding: 0; line-height: 24px; }
.notice button span { display: inline-block; }
.block { width: 130px; margin-left: auto; }
.allow { width: 90px; margin-left: 12px; }
.notice .x { margin: 0 7px 0 13px; }
u { text-underline-offset: 2px; }
.projectbar { height: 35px; flex: none; background: #25618a; color: #fff; font-family: "Noto Sans", sans-serif; display: flex; align-items: center; padding-left: 10px; }
.project { margin-left: 10px; font-size: 16px; line-height: 22px; }
.caret.light { background: #a9c0d1; margin-left: 6px; }
.bell { margin-left: 490px; margin-top: 2px; }
.psearch { width: 234px; height: 24px; flex: none; margin-left: 26px; background: #4c7e9f; border-radius: 3px; display: flex; align-items: center; padding: 0 5px 0 8px; color: #a7c0d0; font-size: 12px; }
.psearch span { margin-left: 8px; margin-top: 1px; }
.psearch em { margin-left: auto; font-size: 13px; margin-top: 2px; }
.help, .user { font-size: 11px; font-weight: 600; font-family: "Open Sans", sans-serif; }
.help { margin-left: 24px; }
.user { margin-left: 24px; }
.caret.faint { background: #648fae; margin-left: 5px; }
.workspace { flex: 1; min-height: 0; background: #212121; border-top: 1px solid #161b1f; display: flex; font-family: "Noto Sans", "Open Sans", sans-serif; font-size: 12px; }
.sidebar { width: 231px; flex: none; background: #303236; border-right: 1px solid #000; display: flex; flex-direction: column; height: 572px; border-bottom: 1px solid #000; }
.burger { height: 34px; flex: none; background: #2b2c2e; border-bottom: 1px solid #000; border-top: 1px solid #38393b; padding: 10px 14px; display: flex; flex-direction: column; gap: 2px; }
.burger i { width: 14px; height: 2px; background: #666; }
.stats { height: 35px; flex: none; background: #222325; border-bottom: 1px solid #000; display: flex; color: #ccc; font-size: 11px; }
.stats > div { width: 38px; border-right: 1px solid #000; border-left: 1px solid #3a3a3c; display: flex; align-items: center; justify-content: center; }
.stats > div:last-child { border-right: 0; width: 37px; }
.stats .vel { width: 117px; border-left: 0; justify-content: flex-start; padding-left: 10px; }
.vel span { margin-left: 3px; }
.vel .person { margin-left: 17px; }
.vel .person + span { margin-left: 3px; }
.font { color: #999; align-items: baseline !important; padding-top: 7px; }
.font big { font-size: 15px; } .font small { font-size: 10px; }
.swatch { width: 8px; height: 8px; background: #b900b9; outline: 1px solid #000; margin: 1px 0 0 2px; width: 9px; height: 9px; }
.add { margin: 6px 6px 8px; height: 28px; flex: none; background: #21608b; border-radius: 2px; display: flex; align-items: center; color: #fff; padding-left: 9px; box-shadow: 0 1px #2a2b2e; }
.add span { margin-left: 12px; }
.menu { padding-bottom: 4px; }
.entry { height: 28px; display: flex; align-items: center; padding-left: 14px; color: #bdbdbd; text-shadow: 0 1px #1e1f22; }
.entry svg { overflow: visible; }
.entry span { margin-left: 10px; }
.entry.on { color: #87bcec; }
.entry em { margin-left: auto; margin-right: 12px; font-size: 11px; color: #777; }
.extra { border-top: 4px solid #282a2d; padding: 1px 0 2px; }
.extra .entry { height: 31px; }
.zoombar { margin-top: auto; height: 23px; flex: none; background: #2b2c2d; border-top: 1px solid #000; display: flex; color: #777; font-size: 11px; }
.auto { width: 43px; border-right: 1px solid #000; padding-left: 9px; line-height: 23px; }
.slider { width: 165px; border-right: 1px solid #000; display: flex; align-items: center; }
.cols { width: 11px; height: 10px; margin-left: 11px; background: repeating-linear-gradient(90deg, #3b3d3f 0 3px, transparent 3px 4px); }
.track { width: 92px; height: 7px; margin-left: 11px; border-radius: 2px; background: #202123; }
.track i { display: block; width: 13px; height: 13px; border: 4px solid #292b2c; margin: -3px 0 0 11px; background: #202122; }
.wide { width: 17px; height: 10px; margin-left: 11px; background: repeating-linear-gradient(90deg, #3b3d3f 0 8px, transparent 8px 9px); }
.arrows { flex: 1; display: grid; place-items: center; }
.panel { width: 349px; flex: none; margin-left: 7px; height: 571px; display: flex; flex-direction: column; background: #49505a; box-shadow: 0 0 0 1px #111; border-bottom: 2px solid #000; }
.sidebar + .panel { margin-left: 6px; }
.phead { height: 34px; flex: none; background: #2b2c2e; border-top: 1px solid #384045; border-bottom: 1px solid #000; display: flex; align-items: center; justify-content: space-between; padding: 0 10px 0 11px; color: #fff; }
.ptitle { display: flex; align-items: center; }
.current .ptitle { padding-left: 3px; }
.ptitle svg { margin: 0 2px 0 7px; }
.ptitle em { color: #999; font-size: 11px; }
.ctl { stroke: #777; } .ctl2 { stroke: #777; } .ctlf { fill: #777; }
.bright .ctl, .bright .ctl2 { stroke: #ccc; } .bright .ctlf { fill: #ccc; }
.iteration { height: 26px; flex: none; background: linear-gradient(#696e7b, #636876); border-top: 1px solid #747a86; border-bottom: 1px solid #50545e; color: #dedede; display: flex; align-items: center; padding: 0 7px; font-size: 11px; line-height: 22px; text-shadow: 0 1px #454952; }
.iteration span:not(.ts) { margin-top: -1px; }
.dot { width: 6px; height: 6px; border-radius: 50%; background: #fff; margin-top: -2px; }
.num { width: 22px; margin-left: 6px; }
.pts { margin-left: auto; }
.ts { width: 17px; height: 14px; border: 1px solid #464b59; border-radius: 2px; font-size: 8px; line-height: 12px; text-align: center; margin-left: 6px; letter-spacing: .5px; margin-top: -1px; }
.stories { flex: 1; }
.story { height: 26px; display: grid; grid-template-columns: 18px 21px 14px 20px 1fr 65px 23px; align-items: center; background: #f3f1d1; border-top: 1px solid #fffff0; border-bottom: 1px solid #dad8b9; color: #111; line-height: 22px; }
.icebox .story { background: #e4eff8; border-top-color: #fff; border-bottom-color: #d8dcdf; font-style: italic; }
.expand { width: 5px; height: 8px; background: #aaa; clip-path: polygon(0 0, 100% 50%, 0 100%); margin-left: 5px; }
.story > svg { margin-top: 1px; }
.points { height: 16px; display: flex; flex-direction: column; justify-content: flex-end; gap: 1px; margin-top: -2px; }
.points i { width: 6px; height: 3px; background: #709abd; }
.icebox .points i { background: #cccfd1; }
.name span { display: inline-block; }
.name a { color: #1b5ca8; }
.finish { width: 49px; height: 22px; background: #203e64; border: 1px solid #17335a; border-radius: 2px; color: #fff; text-align: center; line-height: 19px; font-size: 11px; margin-left: 11px; margin-top: -2px; }
.finish span { display: inline-block; }
.estimates { display: flex; gap: 4px; height: 14px; margin-top: 3px; }
.est { width: 12px; height: 14px; border-bottom: 1px solid #777; display: flex; flex-direction: column; gap: 1px; align-items: center; justify-content: flex-end; padding-bottom: 2px; }
.est b { width: 6px; height: 3px; background: #709abd; flex: none; }
.est b.hollow { background: #fff; border: 1px solid #ccc; }
.pick { border-left: 1px dotted #aaa; height: 19px; display: flex; align-items: center; padding-left: 6px; }
.pick i { width: 10px; height: 10px; border: 1px solid #b5b5b5; background: #f5f5f5; }
.pfoot { height: 24px; flex: none; background: #2b2c2e; border-top: 1px solid #000; box-shadow: inset 0 1px #36383a; position: relative; display: grid; place-items: center; }
.link { margin-left: 6px; margin-top: -2px; }
.cog { position: absolute; right: 8px; top: 7px; }
</style>
